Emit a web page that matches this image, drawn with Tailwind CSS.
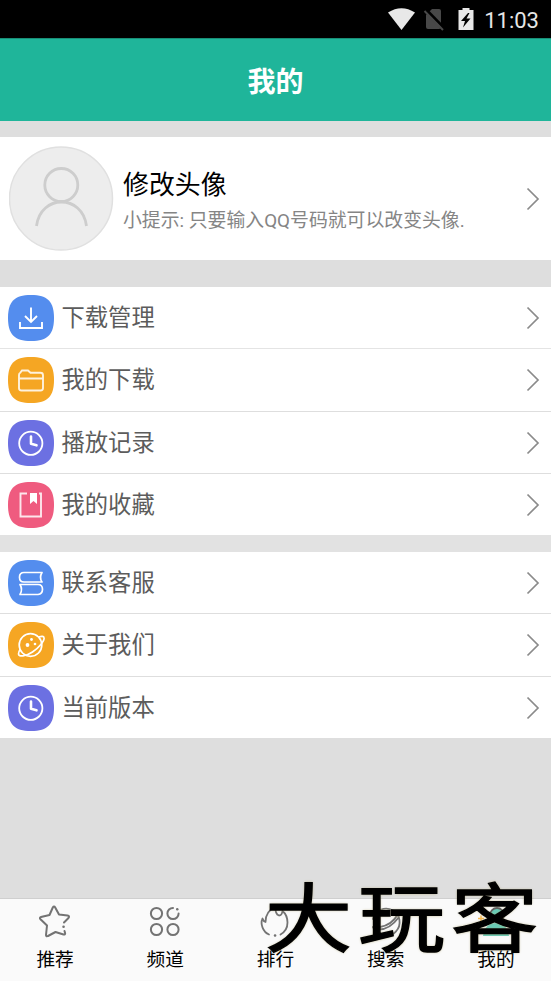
<!DOCTYPE html>
<html lang="zh-CN">
<head>
<meta charset="utf-8">
<title>我的</title>
<script src="https://cdn.jsdelivr.net/npm/@tailwindcss/browser@4"></script>
</head>
<body class="bg-[#dedede]">
<svg class="hidden">
  <symbol id="squircle" viewBox="0 0 46 46"><path d="M23 0C40 0 46 7 46 23S40 46 23 46 0 39 0 23 6 0 23 0Z" fill="currentColor"/></symbol>
  <symbol id="chev" viewBox="0 0 14 24"><path d="M1.500 1.500 12 12 1.500 22.500" fill="none" stroke="#8b8b8b" stroke-width="1.700"/></symbol>
  <symbol id="clock" viewBox="0 0 46 46"><g fill="none" stroke="#fff"><circle cx="22.800" cy="23.300" r="11.600" stroke-width="1.800"/><path d="M23 16.500v7.300l5.500 1.500" stroke-width="2.600" stroke-linecap="round" stroke-linejoin="round"/></g></symbol>
</svg>
<div class="relative flex h-[981px] w-[551px] flex-col overflow-hidden font-['Roboto','Noto_Sans_CJK_SC',sans-serif]">
  <div class="flex h-[38px] shrink-0 items-center justify-end bg-black pr-[12px] text-[#e6e6e6]">
    <svg class="mr-[10px] h-[38px] w-[86px]" viewBox="0 0 86 38">
      <path d="M0 12.500Q13.500 4 27 12.500L13.500 30Z" fill="#e8e8e8"/>
      <path d="M44 9h7q2 0 2 2v16q0 2-2 2H40q-2 0-2-2V15Z" fill="#484848"/>
      <path d="M37.500 9 57 29" stroke="#000" stroke-width="3"/>
      <path d="M36.500 11 55 30" stroke="#484848" stroke-width="1.900"/>
      <path d="M70.500 10h4V8h7v2h4v20h-15Z" fill="#e8e8e8"/>
      <path d="m80 13-7 8h4l-2 6.500 7.500-9h-4l3-5.500Z" fill="#000"/>
    </svg>
    <span class="pt-[3px] text-[22px] leading-[30px]">11:03</span>
  </div>
  <header class="flex h-[83px] shrink-0 items-center justify-center border-t border-[#188f77] bg-[#1fb59a] pt-[5px] text-[28px] font-bold text-white">我的</header>

  <section class="mt-4 flex h-[123px] shrink-0 items-center bg-white pl-[9px] pr-[11px]">
    <svg class="h-[105px] w-[105px]" viewBox="0 0 105 105"><circle cx="52" cy="52.500" r="51.500" fill="#ededed" stroke="#e0e0e0" stroke-width="1.500"/><g fill="none" stroke="#cdcdcd" stroke-width="2.800"><circle cx="52.300" cy="39" r="16.500"/><path d="M27.500 80c4-32 46-32 50 0"/></g></svg>
    <div class="ml-[9px] flex-1 pt-[7px]">
      <div class="text-[25.900px] leading-[37px] text-black">修改头像</div>
      <div class="text-[18.850px] leading-[34px] text-[#858585]">小提示: 只要输入QQ号码就可以改变头像.</div>
    </div>
    <svg class="h-6 w-3.5"><use href="#chev"/></svg>
  </section>

  <section class="mt-[27px] flex h-[248px] shrink-0 flex-col bg-white text-[23.300px] text-[#5c5c5c]">
    <div class="flex h-[62px] items-center border-b border-[#e4e4e4] pl-[7.500px] pr-[11px]">
      <svg class="h-[46px] w-[46px] text-[#548dee]" viewBox="0 0 46 46"><use href="#squircle"/><path d="M23 12.500v14M17 21l6 6 6-6M12 27v6h22v-6" fill="none" stroke="#fff" stroke-width="1.900"/></svg>
      <span class="ml-2 flex-1 pt-[1px] leading-[34px]">下载管理</span><svg class="h-6 w-3.5"><use href="#chev"/></svg>
    </div>
    <div class="flex h-[63px] items-center border-b border-[#dedede] pl-[7.500px] pr-[11px]">
      <svg class="h-[46px] w-[46px] text-[#f5a623]" viewBox="0 0 46 46"><use href="#squircle"/><path d="M11 31V18q0-1.500 1.200-2.200L14 13.500h6l2.500 2.300h10q2.500 0 2.500 2.500V31q0 2.500-2.500 2.500h-19Q11 33.500 11 31ZM11 21.500h24" fill="none" stroke="#fff" stroke-opacity=".85" stroke-width="1.900"/></svg>
      <span class="ml-2 flex-1 leading-[34px]">我的下载</span><svg class="h-6 w-3.5"><use href="#chev"/></svg>
    </div>
    <div class="flex h-[62px] items-center border-b border-[#dedede] pl-[7.500px] pr-[11px]">
      <svg class="h-[46px] w-[46px] text-[#6c70e2]" viewBox="0 0 46 46"><use href="#squircle"/><use href="#clock"/></svg>
      <span class="ml-2 flex-1 leading-[34px]">播放记录</span><svg class="h-6 w-3.5"><use href="#chev"/></svg>
    </div>
    <div class="flex h-[61px] items-center pl-[7.500px] pr-[11px]">
      <svg class="h-[46px] w-[46px] text-[#ef5b7f]" viewBox="0 0 46 46"><use href="#squircle"/><path d="M19 11.500h-6.500v23h20.500v-23h-2" fill="none" stroke="#fff" stroke-opacity=".85" stroke-width="1.900"/><path d="M22 11h7v11l-3.500-3-3.500 3Z" fill="#fff"/></svg>
      <span class="ml-2 flex-1 leading-[34px]">我的收藏</span><svg class="h-6 w-3.5"><use href="#chev"/></svg>
    </div>
  </section>

  <section class="flex h-[203px] shrink-0 flex-col border-t-[17px] border-[#e2e2e2] bg-white text-[23.300px] text-[#5c5c5c]">
    <div class="flex h-[62px] items-center border-b border-[#dedede] pl-[7.500px] pr-[11px]">
      <svg class="h-[46px] w-[46px] text-[#548dee]" viewBox="0 0 46 46"><use href="#squircle"/><path d="M34 12.500H16q-4.500 0-4.500 4.700T16 22h18q-3-4.500 0-9.500ZM12 24.500h18q4.500 0 4.500 4.800T30 34.500H12q3-5 0-10Z" fill="none" stroke="#fff" stroke-width="1.700" stroke-linejoin="round"/></svg>
      <span class="ml-2 flex-1 pt-[1px] leading-[34px]">联系客服</span><svg class="h-6 w-3.5"><use href="#chev"/></svg>
    </div>
    <div class="flex h-[63px] items-center border-b border-[#dedede] pl-[7.500px] pr-[11px]">
      <svg class="h-[46px] w-[46px] text-[#f5a623]" viewBox="0 0 46 46"><use href="#squircle"/><g fill="none" stroke="#fff" stroke-width="1.700"><circle cx="22.500" cy="23" r="11.300"/><path d="M30.500 15q5-1.500 5.500.5c1 3-5 10-11.500 14.500S10.500 35 10.500 32q0-2.500 2-5"/></g><g fill="#fff"><circle cx="19.500" cy="23" r="1.900"/><circle cx="23.500" cy="17.500" r="1.400"/><circle cx="27" cy="22" r="1.300"/></g></svg>
      <span class="ml-2 flex-1 leading-[34px]">关于我们</span><svg class="h-6 w-3.5"><use href="#chev"/></svg>
    </div>
    <div class="flex h-[61px] items-center pl-[7.500px] pr-[11px]">
      <svg class="h-[46px] w-[46px] text-[#6c70e2]" viewBox="0 0 46 46"><use href="#squircle"/><use href="#clock"/></svg>
      <span class="ml-2 flex-1 leading-[34px]">当前版本</span><svg class="h-6 w-3.5"><use href="#chev"/></svg>
    </div>
  </section>

  <nav class="mt-auto grid h-[83px] shrink-0 grid-cols-5 border-t border-[#cfcfcf] bg-[#fafafa] text-center text-[18.700px] leading-[28px] text-black">
    <div class="flex flex-col items-center pt-[5px]">
      <svg class="h-9 w-9" viewBox="0 0 36 36" fill="none" stroke="#737373" stroke-width="2" stroke-linecap="round" stroke-linejoin="round"><path d="M27 18.500 31.500 14q1.500-2-1-2.500L22 10.500 18.200 3.500q-1.200-2-2.400 0L12.500 11 4 13q-2 .6-.5 2.200L10 21.500 9 31q.3 2 2 1l7.500-4 8 2.500q2 .3 1.600-1.500L27.500 27"/><path d="M26.500 22.700h.1" stroke-width="2.500"/></svg>
      <span class="mt-[6px]">推荐</span>
    </div>
    <div class="flex flex-col items-center pt-[5px]">
      <svg class="h-9 w-9" viewBox="0 0 36 36" fill="none" stroke="#737373" stroke-width="2"><circle cx="9.500" cy="9.500" r="5.600"/><circle cx="9.500" cy="25.500" r="5.600"/><circle cx="26" cy="25.500" r="5.600"/><path d="M26 3.900A5.600 5.600 0 1 0 31.600 9.500" stroke-linecap="round"/><path d="M30.200 5.300h.1" stroke-width="2.400" stroke-linecap="round"/></svg>
      <span class="mt-[6px]">频道</span>
    </div>
    <div class="flex flex-col items-center pt-[5px]">
      <svg class="h-9 w-9" viewBox="0 0 36 36" fill="none" stroke="#737373" stroke-width="1.800" stroke-linecap="round" stroke-linejoin="round"><path d="M12 30.500C6 28 3 20 5.500 14.500q1 3 3 3.500Q8.500 7 18.500 3q-.5 7 3.500 8.500 3 0 3.500-4.500c6 5 8 18-2 23.500"/><path d="M18 31.500h.1" stroke-width="2.500"/></svg>
      <span class="mt-[6px]">排行</span>
    </div>
    <div class="flex flex-col items-center pt-[5px]">
      <svg class="h-9 w-9" viewBox="0 0 36 36" fill="none" stroke="#737373" stroke-width="1.800" stroke-linecap="round"><path d="M5 15a13.500 13.500 0 1 1 1.500 10Q20 28 31 13"/><path d="M5 23q4 1 7 0 12-2 18-13"/><path d="M5.500 23.500h.1" stroke-width="2.500"/></svg>
      <span class="mt-[6px]">搜索</span>
    </div>
    <div class="flex flex-col items-center pt-[5px]">
      <svg class="h-9 w-9" viewBox="0 0 36 36"><circle cx="19" cy="11" r="7" fill="#68cdb8" stroke="#606060" stroke-width="1.800"/><path d="M5 32q2-13 13-13t13 13Z" fill="#68cdb8"/><path d="M3 11.500v6M0 14.500h6" stroke="#f7b94f" stroke-width="1.500"/></svg>
      <span class="mt-[6px]">我的</span>
    </div>
  </nav>

  <div class="pointer-events-none absolute left-[265px] top-[876px] origin-top-left whitespace-nowrap font-['Noto_Sans_CJK_SC',sans-serif] text-[87px] font-normal leading-[87px] tracking-[6px] text-black [-webkit-text-stroke:1.5px_black] [text-shadow:0_0_3px_#a79d65] [transform:scaleY(.86)]">大玩客</div>
</div>
</body>
</html>
